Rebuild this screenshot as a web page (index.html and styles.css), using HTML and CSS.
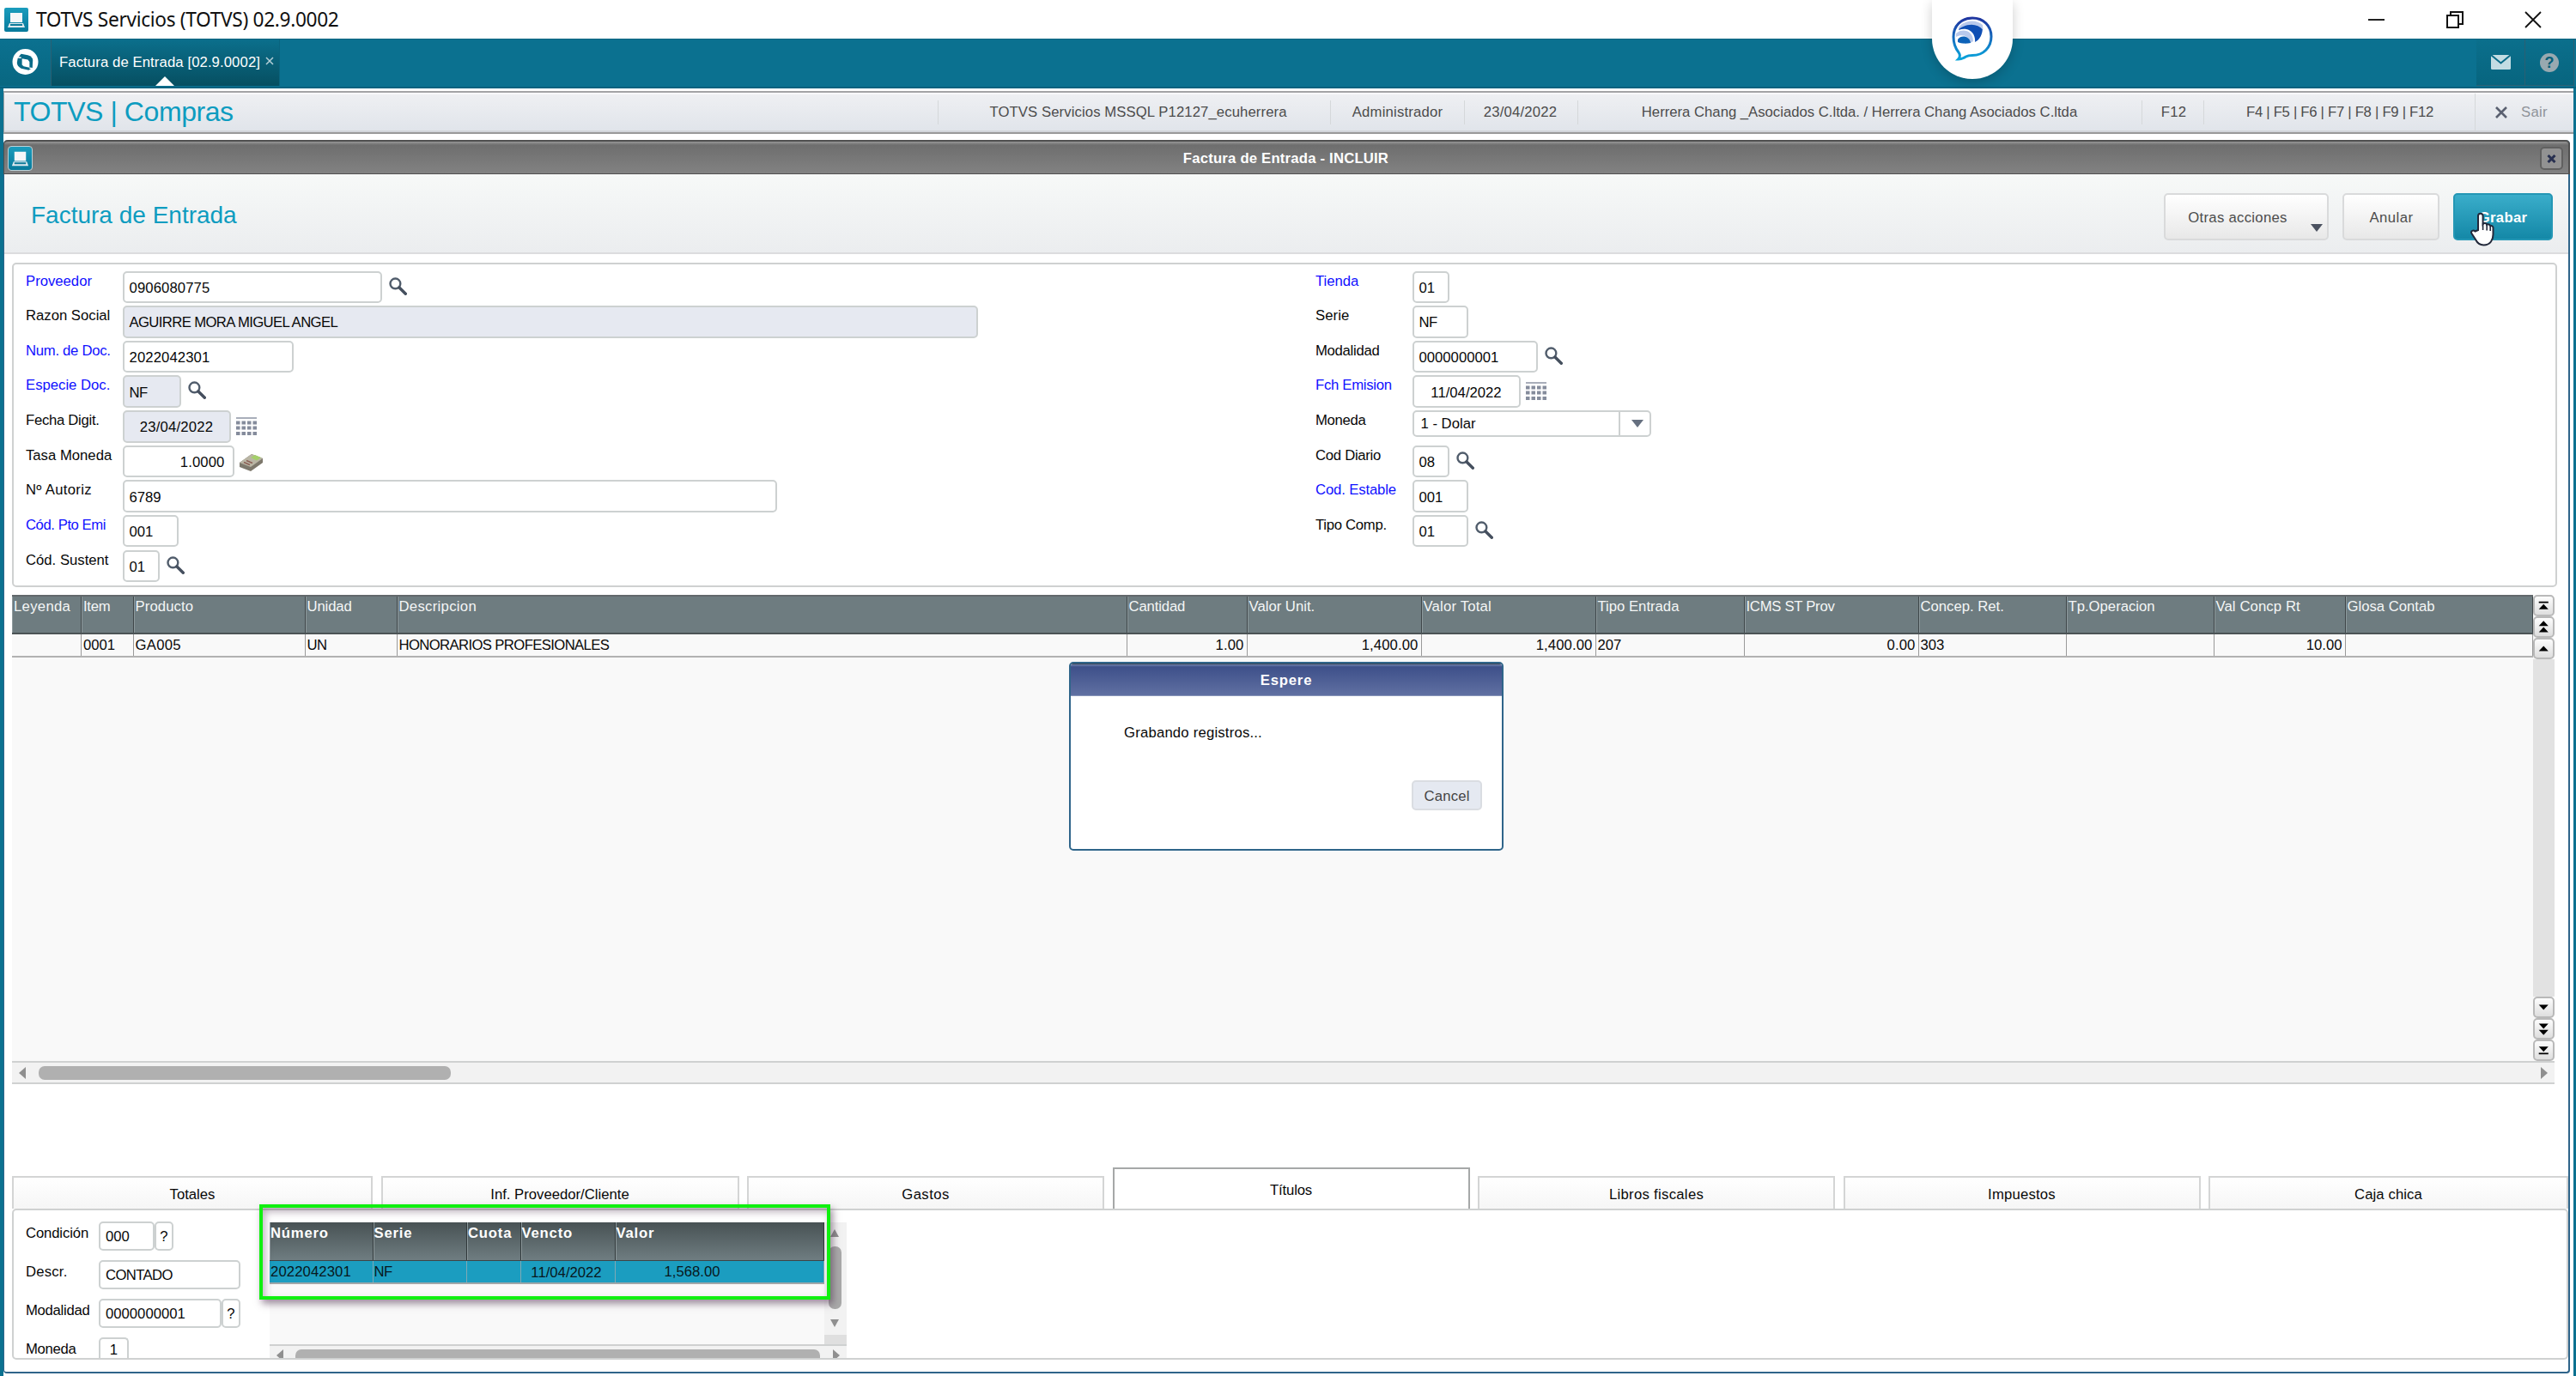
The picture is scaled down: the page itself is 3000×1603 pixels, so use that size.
FILE: index.html
```html
<!DOCTYPE html>
<html lang="es">
<head>
<meta charset="utf-8">
<title>TOTVS Servicios (TOTVS) 02.9.0002</title>
<link rel="stylesheet" href="styles.css">
</head>
<body>
<svg class="defs" width="0" height="0">
  <defs>
    <linearGradient id="tealGrad" x1="0" y1="0" x2="0" y2="1"><stop offset="0" stop-color="#1a9cbd"/><stop offset="1" stop-color="#087a9b"/></linearGradient>
    <linearGradient id="chatGrad" x1="0" y1="0" x2="0" y2="1"><stop offset="0" stop-color="#1f35a0"/><stop offset="1" stop-color="#0aa5dc"/></linearGradient>
    <symbol id="laptop" viewBox="0 0 28 28"><rect width="28" height="28" rx="2" fill="url(#tealGrad)"/><path d="M7 6h14v11H7z" fill="#f4f6f8"/><path d="M6 18h16l2 5H4z" fill="#dfe9ee"/><path d="M7 19h14v2H7z" fill="#0c7a99"/></symbol>
    <symbol id="lens" viewBox="0 0 21 21"><circle cx="7.4" cy="7.4" r="5.9" fill="none" stroke="#515d6c" stroke-width="2.4"/><path d="M12 12l7.3 7.3" stroke="#454f5e" stroke-width="3.4" stroke-linecap="round"/></symbol>
    <symbol id="calendar" viewBox="0 0 24 22"><path d="M0 1h24" stroke="#a9aeba" stroke-width="2"/><path d="M0 6.500h24M0 12.500h24M0 19h24" stroke="#858c9c" stroke-width="4.200" stroke-dasharray="4.500 2"/></symbol>
  </defs>
</svg>

<header class="os-bar">
  <svg class="os-icon" viewBox="0 0 28 28"><use href="#laptop"/></svg>
  <span class="os-title">TOTVS Servicios (TOTVS) 02.9.0002</span>
  <div class="os-controls">
    <svg viewBox="0 0 20 20"><path d="M0 10h19" stroke="#222" stroke-width="2"/></svg>
    <svg viewBox="0 0 20 20"><path d="M1 5h13v14H1zM5 5V1h14v14h-5" fill="none" stroke="#111" stroke-width="2"/></svg>
    <svg viewBox="0 0 20 20"><path d="M1 1l18 18M19 1L1 19" stroke="#111" stroke-width="1.800"/></svg>
  </div>
</header>

<nav class="tab-bar">
  <div class="home">
    <svg viewBox="0 0 32 32"><circle cx="16" cy="16" r="15.500" fill="#fff"/><path d="M11 6.500l8 1.500q6 2 6 6l-.5 9.500L20 26l-9-2q-5-3-5-7l1-6z" fill="#0a6b88"/><path d="M12 12l7 1.500 2 2.500v7l-7-1.500-2-2z" fill="#fff"/><path d="M6 10.500l5 .5M21 23.500l3.500.5" stroke="#fff" stroke-width="1.500"/></svg>
  </div>
  <div class="app-tab"><span class="ls1">Factura de Entrada [02.9.0002]</span><svg class="tab-x" viewBox="0 0 10 10"><path d="M1 1l8 8M9 1L1 9" stroke="#b6d0d8" stroke-width="1.500"/></svg><i class="pointer"></i></div>
  <div class="tab-tools">
    <div class="tool"><svg width="23" height="17" viewBox="0 0 23 17"><rect width="23" height="17" rx="1.500" fill="#c3dce3"/><path d="M0 0l11.500 9.500L23 0" fill="none" stroke="#0a6b88" stroke-width="2"/></svg></div>
    <div class="tool"><div class="help">?</div></div>
  </div>
  <div class="assistant">
    <svg width="48" height="54" viewBox="0 0 48 54"><path d="M24 2C37 2 46 11 46 23.500S37 45.500 24 45.500c-3 0-5 0-7.500 1.500-3 2-6 3-9 3 2-2 2.500-5 .5-8C4 37 2 31 2 24 2 11 11 2 24 2z" fill="#fff" stroke="url(#chatGrad)" stroke-width="3"/><path d="M9 13C18 6 29 5 36 12c0 9-3 15-9 18 1-8-4-14-10-15-3-.5-6 0-9 1z" fill="#0f4fb4"/><path d="M8 13C15 4 28 3 36 10l.5 6C30 8 18 8 8 15z" fill="#b8c9ec"/><path d="M5 20c8-7 20-3 20 9l-3 2C20 23 12 20 5 24z" fill="#b8c9ec"/><path d="M7 27c4-6 14-4 15 4-5 1-11 1-15-1z" fill="#0c62b8"/></svg>
  </div>
</nav>

<main class="workspace">
  <section class="status">
    <h1 class="module">TOTVS | Compras</h1>
    <span class="cell c-env ls1">TOTVS Servicios MSSQL P12127_ecuherrera</span>
    <span class="cell c-user ls2">Administrador</span>
    <span class="cell c-date ls2">23/04/2022</span>
    <span class="cell c-firm">Herrera Chang _Asociados C.ltda. / Herrera Chang Asociados C.ltda</span>
    <span class="cell c-f12 ls2">F12</span>
    <span class="cell c-keys tight">F4 | F5 | F6 | F7 | F8 | F9 | F12</span>
    <span class="cell c-exit"><svg width="14" height="14" viewBox="0 0 14 14"><path d="M1 1l12 12M13 1L1 13" stroke="#5a6070" stroke-width="2.600"/></svg><span class="ls3">Sair</span></span>
  </section>

  <section class="window">
    <div class="win-title">
      <svg class="win-icon" viewBox="0 0 28 28"><use href="#laptop"/></svg>
      <span class="win-name ls2">Factura de Entrada - INCLUIR</span>
      <div class="win-close"><svg width="11" height="10" viewBox="0 0 11 10"><path d="M1.500 1l8 8M9.500 1l-8 8" stroke="#283050" stroke-width="3"/></svg></div>
    </div>

    <div class="win-head">
      <h2>Factura de Entrada</h2>
      <div class="actions">
        <div class="btn btn-more"><span class="ls3">Otras acciones</span><i class="caret"></i></div>
        <div class="btn btn-cancel"><span class="ls4">Anular</span></div>
        <div class="btn btn-save"><span class="ls3">Grabar</span>
          <svg class="hand" width="30" height="40" viewBox="0 0 30 40"><path d="M11 21V4.500a2.800 2.800 0 0 1 5.600 0V14a2.700 2.700 0 0 1 4.600.8 2.700 2.700 0 0 1 4 1.400 2.300 2.300 0 0 1 3.300 2V26c0 6-3 12.500-11 12.500-5 0-7.500-2.500-9.500-6.500L3.500 25c-1.500-3 2-4.500 4-2.500z" fill="#fff" stroke="#22283a" stroke-width="2"/><path d="M16.600 13v8M21.200 15v6.500M25.200 17v5" stroke="#22283a" stroke-width="1.600"/></svg>
        </div>
      </div>
    </div>

    <div class="form">
      <div class="col col-left">
        <div class="row"><label class="req">Proveedor</label><div class="in w302"><span class="ls1">0906080775</span></div><svg class="ic"><use href="#lens"/></svg></div>
        <div class="row"><label>Razon Social</label><div class="in off w996"><span class="caps">AGUIRRE MORA MIGUEL ANGEL</span></div></div>
        <div class="row"><label class="req tight">Num. de Doc.</label><div class="in w199"><span class="ls1">2022042301</span></div></div>
        <div class="row"><label class="req">Especie Doc.</label><div class="in off w68"><span class="caps">NF</span></div><svg class="ic"><use href="#lens"/></svg></div>
        <div class="row"><label class="tight">Fecha Digit.</label><div class="in off w126 mid"><span class="ls2">23/04/2022</span></div><svg class="ic cal"><use href="#calendar"/></svg></div>
        <div class="row"><label>Tasa Moneda</label><div class="in w130 end"><span class="ls1">1.0000</span></div>
          <svg class="ic calc" viewBox="0 0 30 22"><path d="M1 11L15 1l13 5v5L14 21 1 16z" fill="#7d786c"/><path d="M1 11L15 1l13 5-14 10z" fill="#b9b5a4"/><path d="M14 5l5-3 7 3-5 3.500z" fill="#a5cf6a"/><path d="M6 10.500l7 3M9 8.500l7 3" stroke="#8b5f55" stroke-width="1.500"/></svg></div>
        <div class="row"><label class="ls3">Nº Autoriz</label><div class="in w762"><span>6789</span></div></div>
        <div class="row"><label class="req tighter">Cód. Pto Emi</label><div class="in w65"><span>001</span></div></div>
        <div class="row"><label>Cód. Sustent</label><div class="in w43"><span>01</span></div><svg class="ic"><use href="#lens"/></svg></div>
      </div>
      <div class="col col-right">
        <div class="row"><label class="req">Tienda</label><div class="in w43"><span>01</span></div></div>
        <div class="row"><label class="ls1">Serie</label><div class="in w65"><span class="caps">NF</span></div></div>
        <div class="row"><label class="tight">Modalidad</label><div class="in w146"><span>0000000001</span></div><svg class="ic"><use href="#lens"/></svg></div>
        <div class="row"><label class="req tight">Fch Emision</label><div class="in w126 mid"><span>11/04/2022</span></div><svg class="ic cal"><use href="#calendar"/></svg></div>
        <div class="row"><label class="tight">Moneda</label><div class="in combo"><span>1 - Dolar</span><b class="drop"><i class="caret"></i></b></div></div>
        <div class="row"><label class="tight">Cod Diario</label><div class="in w43"><span>08</span></div><svg class="ic"><use href="#lens"/></svg></div>
        <div class="row"><label class="req tight1">Cod. Estable</label><div class="in w65"><span>001</span></div></div>
        <div class="row"><label class="tight">Tipo Comp.</label><div class="in w65"><span>01</span></div><svg class="ic"><use href="#lens"/></svg></div>
      </div>
    </div>

    <div class="grid">
      <div class="grid-main">
        <div class="g-row g-head">
          <span class="ls3">Leyenda</span><span class="tight">Item</span><span class="ls1">Producto</span><span class="tight1">Unidad</span><span class="ls3">Descripcion</span><span class="tight1">Cantidad</span><span>Valor Unit.</span><span class="ls2">Valor Total</span><span>Tipo Entrada</span><span class="tight">ICMS ST Prov</span><span>Concep. Ret.</span><span>Tp.Operacion</span><span class="ls1">Val Concp Rt</span><span>Glosa Contab</span>
        </div>
        <div class="g-row g-body">
          <span></span><span>0001</span><span class="ls3">GA005</span><span class="caps">UN</span><span class="caps">HONORARIOS PROFESIONALES</span><span class="r ls1">1.00</span><span class="r ls1">1,400.00</span><span class="r ls1">1,400.00</span><span>207</span><span class="r ls1">0.00</span><span>303</span><span></span><span class="r">10.00</span><span></span>
        </div>
      </div>
      <div class="v-nav">
        <svg class="nb" viewBox="0 0 24 24"><path d="M5.500 6.500h13v2h-13zM12 10l6.500 7h-13z"/></svg>
        <svg class="nb" viewBox="0 0 24 24"><path d="M12 3.500l6.500 7h-13zM12 12l6.500 7h-13z"/></svg>
        <svg class="nb" viewBox="0 0 24 24"><path d="M12 8.500l6.500 7h-13z"/></svg>
        <div class="track"></div>
        <svg class="nb" viewBox="0 0 24 24"><path d="M12 15.500l6.500-7h-13z"/></svg>
        <svg class="nb" viewBox="0 0 24 24"><path d="M12 12l6.500-7h-13zM12 20.500l6.500-7h-13z"/></svg>
        <svg class="nb" viewBox="0 0 24 24"><path d="M12 14l6.500-7h-13zM5.500 15.500h13v2h-13z"/></svg>
      </div>
    </div>
    <div class="h-scroll"><i class="arr left"></i><i class="thumb"></i><i class="arr right"></i></div>

    <div class="tabs">
      <div class="tab">Totales</div><div class="tab">Inf. Proveedor/Cliente</div><div class="tab ls4">Gastos</div><div class="tab active tight1">Títulos</div><div class="tab ls3">Libros fiscales</div><div class="tab ls2">Impuestos</div><div class="tab ls1">Caja chica</div>
    </div>

    <div class="panel">
      <div class="pay">
        <div class="prow"><label class="tight1">Condición</label><div class="in w65"><span>000</span></div><div class="q">?</div></div>
        <div class="prow"><label class="ls2">Descr.</label><div class="in w165"><span class="caps">CONTADO</span></div></div>
        <div class="prow"><label class="tight">Modalidad</label><div class="in w143"><span>0000000001</span></div><div class="q">?</div></div>
        <div class="prow"><label class="tight">Moneda</label><div class="in w35 mid cut"><span>1</span></div></div>
      </div>
      <div class="dues">
        <div class="dues-top">
          <div class="dues-table">
            <div class="d-row d-head"><span>Número</span><span>Serie</span><span>Cuota</span><span>Vencto</span><span>Valor</span></div>
            <div class="d-row d-body"><span class="ls1">2022042301</span><span class="caps">NF</span><span></span><span class="venc">11/04/2022</span><span class="val">1,568.00</span></div>
          </div>
          <div class="d-scroll"><i class="arr up"></i><i class="d-thumb"></i><i class="arr down"></i></div>
        </div>
        <div class="d-hscroll"><i class="arr left"></i><i class="d-hthumb"></i><i class="arr right"></i></div>
        <div class="highlight"></div>
      </div>
    </div>

    <div class="dialog">
      <div class="dlg-title">Espere</div>
      <div class="dlg-body"><p class="ls2">Grabando registros...</p><div class="dlg-btn"><span class="ls2">Cancel</span></div></div>
    </div>
  </section>
</main>
</body>
</html>
```
FILE: styles.css
```css
* { box-sizing: border-box; }
html, body { margin: 0; padding: 0; }
body {
  width: 3000px; height: 1603px; overflow: hidden;
  display: flex; flex-direction: column;
  background: #fff; color: #080808;
  font-family: "Liberation Sans", Arial, sans-serif; font-size: 16.7px; line-height: 20px;
  white-space: nowrap;
}
.defs { position: absolute; }
h1, h2, p { margin: 0; font-weight: normal; }
svg { display: block; flex: none; }

/* tracking steps */
.ls1 { letter-spacing: .1px; }
.ls2 { letter-spacing: .2px; }
.ls3 { letter-spacing: .3px; }
.ls4 { letter-spacing: .45px; }
.tight1 { letter-spacing: -.13px; }
.tight { letter-spacing: -.28px; }
.tighter { letter-spacing: -.44px; }
.caps { letter-spacing: -.62px; }

/* operating system title bar */
.os-bar { height: 45px; flex: none; display: flex; align-items: center; padding: 0 40px 0 5px; background: #fff; }
.os-icon { width: 28px; height: 28px; }
.os-title { margin-left: 9px; font: 22.7px/30px "Noto Sans", sans-serif; letter-spacing: -.33px; color: #111; }
.os-controls { margin-left: auto; display: flex; gap: 71px; align-items: center; }
.os-controls svg { width: 20px; height: 20px; }

/* application tab strip */
.tab-bar { position: relative; height: 58px; flex: none; display: flex; background: #0b7190; border-top: 1px solid #04627f; border-bottom: 2px solid #04627f; }
.home { width: 60px; height: 54px; padding: 10px 0 0 14px; border-right: 1px solid #2b5f72; background: linear-gradient(#0b7190, #086781); }
.home svg { width: 31px; height: 32px; }
.app-tab { position: relative; width: 266px; height: 54px; padding-left: 9px; display: flex; align-items: center; gap: 6px; color: #fff; background: linear-gradient(#0b6f8c, #064f61); border-right: 1px solid #0a647e; }
.tab-x { width: 10px; height: 10px; margin-bottom: 4px; }
.pointer { position: absolute; left: 121px; bottom: 0; border: 11px solid transparent; border-top: 0; border-bottom-color: #fff; }
.tab-tools { margin-left: auto; display: flex; margin-right: 2px; }
.tool { width: 57px; height: 54px; display: flex; align-items: center; justify-content: center; border-right: 1px solid #2b5f72; border-bottom: 1px solid #2b5f72; background: linear-gradient(#0b6f8c, #07657f); }
.help { width: 22px; height: 22px; border-radius: 50%; background: #98a9b0; color: #075f78; font-weight: bold; font-size: 18px; line-height: 22px; text-align: center; }
.assistant { position: absolute; left: 2250px; top: -46px; width: 94px; height: 92px; border-radius: 0 0 47px 47px; background: #fff; box-shadow: 0 4px 14px rgba(0,0,0,.2); clip-path: inset(0 -20px -20px -20px); padding: 19px 0 0 23px; }

/* workspace */
.workspace { flex: 1; display: flex; flex-direction: column; padding: 3px 0; background: #fff; border: solid #0b7190; border-width: 0 3px 0 4px; }
.status { height: 50px; flex: none; display: flex; align-items: center; border: 1px solid #a3a3a5; border-top-width: 2px; border-bottom: 2px solid #999; border-right: 0; background: linear-gradient(#eff0f3, #e0e4ea); color: #4c4c4c; box-shadow: inset 0 2px 0 #f8f8fa, inset 0 -2px 0 #d2d5da; }
.module { width: 1087px; padding-left: 11px; margin-top: -2px; font-size: 32px; line-height: 44px; letter-spacing: -.42px; color: #0d9cc0; }
.cell { height: 28px; flex: none; display: flex; align-items: center; justify-content: center; border-left: 1px solid #d5d8da; }
.c-env { width: 457px; padding-left: 9px; }
.c-user { width: 156px; }
.c-date { width: 132px; padding-right: 2px; }
.c-firm { width: 657px; padding-right: 1px; }
.c-f12 { width: 72px; padding-left: 2px; }
.c-keys { width: 316px; padding-left: 1px; }
.cell.c-exit { flex: 1; height: 44px; gap: 16px; padding-right: 7px; color: #8f9399; }

.window { position: relative; margin: 7px 4px 0 0; flex: 1; display: flex; flex-direction: column; border: 2px solid #2f658a; border-top: 0; border-left-width: 1px; border-radius: 5px 5px 4px 4px; background: #fff; }
.win-title { height: 40px; margin: 0 -2px 0 -1px; flex: none; display: flex; align-items: center; justify-content: space-between; padding: 2px 6px 0 5px; border: solid #4f4f4f; border-width: 2px 2px 1px 1px; border-radius: 5px 5px 0 0; background: linear-gradient(#979797, #6e6e6e 4px, #828282); color: #fff; }
.win-icon { width: 27px; height: 27px; outline: 1px solid #bcd2d8; border-radius: 3px; }
.win-name { font-weight: bold; }
.win-close { width: 27px; height: 27px; display: flex; align-items: center; justify-content: center; border: 2px solid #606060; border-radius: 5px; background: #929292; }

.win-head { height: 93px; flex: none; display: flex; justify-content: space-between; align-items: flex-start; padding: 22px 18px 0 31px; background: linear-gradient(#f7f9f8, #ebedef); border-bottom: 2px solid #dcdcde; }
.win-head h2 { font-size: 28px; line-height: 32px; margin-top: 10px; color: #0d9cc0; }
.actions { display: flex; gap: 16px; }
.btn { position: relative; height: 55px; padding-top: 3px; display: flex; align-items: center; justify-content: center; border: 2px solid #d9dadb; border-radius: 5px; background: linear-gradient(#fff, #e8e8e8); color: #4c4c4c; }
.btn-more { width: 192px; padding-right: 20px; }
.btn-more .caret { position: absolute; right: 5px; bottom: 8px; }
.btn-cancel { width: 113px; padding-left: 1px; }
.btn-save { width: 116px; border-color: #2497b5; background: linear-gradient(#3aadca, #1488a7); color: #fff; font-weight: bold; }
.hand { position: absolute; left: 16px; top: 20px; }
.caret { display: block; border: 7px solid transparent; border-bottom: 0; border-top: 9px solid #4b5260; }

/* invoice header form */
.form { height: 378px; margin: 10px 13px 0 9px; flex: none; display: flex; border: 2px solid #cfd1d1; border-radius: 5px; padding-top: 7.500px; }
.col { flex: none; }
.col-left { width: 1516px; padding-left: 14px; }
.row { height: 40.650px; display: flex; align-items: flex-start; }
.row label { width: 112.500px; flex: none; padding-top: 2px; }
.req { color: #1010ff; }
.in { height: 37.500px; flex: none; display: flex; align-items: center; padding: 3px 0 0 6px; border: 2px solid #cdd1d1; border-radius: 5px; background: #fff; }
.off { background: #e6e9f1; }
.mid { justify-content: center; padding-left: 0; }
.end { justify-content: flex-end; padding-right: 9px; }
.w302 { width: 302px; } .w996 { width: 996px; } .w199 { width: 199px; } .w68 { width: 68px; }
.w126 { width: 126px; } .w130 { width: 130px; } .w762 { width: 762px; } .w65 { width: 65px; }
.w43 { width: 43px; } .w146 { width: 146px; } .w165 { width: 165px; } .w143 { width: 143px; } .w35 { width: 35px; }
.ic { width: 21px; height: 21px; margin: 7px 0 0 8px; }
.cal { width: 24px; height: 22px; margin: 8px 0 0 6px; }
.calc { width: 30px; height: 22px; margin: 9px 0 0 5px; }
.combo { width: 278px; height: 31px; padding: 0 0 0 8px; justify-content: space-between; }
.drop { width: 36px; height: 27px; padding-left: 6px; border-left: 2px solid #cdd1d1; display: flex; align-items: center; justify-content: center; }
.drop .caret { border-top-color: #667080; }

/* items grid */
.grid { height: 543px; margin: 9px 18px 0 9px; flex: none; display: flex; background: #f9f9f9; }
.grid-main { width: 2936px; flex: none; }
.g-row { display: grid; grid-template-columns: 81px 60.500px 200px 107px 850px 140px 203px 203px 173px 203px 172px 172px 153px 218.500px; }
.g-head { height: 46px; background: #6e7c80; border-top: 2px solid #62686b; border-bottom: 2px solid #4c5456; color: #f4f6f6; }
.g-head span { padding: 2px 0 0 2px; border-right: 1px solid #3f474a; box-shadow: inset 1px 0 0 #8d999c; }
.g-body { height: 27px; border-bottom: 2px solid #b2b2b2; }
.g-body span { padding: 3px 0 0 2px; border-right: 1px solid #9a9a9a; }
.g-body .r { text-align: right; padding-right: 3px; }
.v-nav { width: 25px; display: flex; flex-direction: column; }
.nb { width: 24.500px; height: 25px; border: 2px solid #b9b9b9; border-radius: 5px; background: linear-gradient(#fdfdfd, #dedede); }
.track { flex: 1; background: #e2e2e2; }
.h-scroll { height: 27px; margin: 0 16px 0 9px; flex: none; display: flex; align-items: center; padding: 0 8px; background: #f2f2f2; border: solid #cfd1d1; border-width: 2px 0; }
.arr { border: 7px solid transparent; flex: none; }
.arr.left { border-left: 0; border-right: 8px solid #8f8f8f; }
.arr.right { margin-left: auto; border-right: 0; border-left: 8px solid #8f8f8f; }
.arr.up { border-top: 0; border-width: 0 5.500px 9px; border-bottom-color: #8f8f8f; }
.arr.down { border-width: 9px 5.500px 0; border-top-color: #8f8f8f; }
.thumb { width: 480px; height: 16px; margin-left: 15px; border-radius: 7px; background: #b0b0b0; }

/* bottom tabs */
.tabs { height: 48px; margin: 97px 0 0 9px; flex: none; display: grid; grid-template-columns: 420px 417px 416px 416px 416px 416px 419px; gap: 9.500px; align-items: end; }
.tab { height: 38px; padding: 3px 0 0 0; display: flex; align-items: center; justify-content: center; border: 2px solid #d4d5d5; border-bottom: 0; background: linear-gradient(#fff, #f6f6f6); }
.tab.active { height: 48px; border-color: #a6a8a8; background: #fff; }
.panel { height: 176px; margin-left: 9px; flex: none; display: flex; border: 2px solid #cfd1d1; border-radius: 5px; clip-path: inset(-20px 0 0 0); }
.pay { width: 298px; height: 172px; flex: none; padding: 13px 0 0 14px; }
.prow { height: 45px; display: flex; align-items: flex-start; }
.prow label { width: 85px; flex: none; padding-top: 4px; }
.prow .in { height: 34px; padding-top: 1px; }
.prow .cut { height: 24px; border-bottom: 0; border-radius: 5px 5px 0 0; padding-top: 4px; }
.q { width: 22px; height: 34px; border: 2px solid #cdd1d1; border-radius: 5px; text-align: center; line-height: 32px; }
.dues { position: relative; width: 672px; height: 158px; flex: none; margin-top: 14px; }
.dues-top { height: 142px; display: flex; background: #f9f9f9; }
.dues-table { width: 646px; flex: none; }
.d-row { display: grid; grid-template-columns: 120.500px 109.500px 62.500px 110px 243px; }
.d-head { height: 45px; background: linear-gradient(#485254, #6f7d81); border-bottom: 1px solid #3c4548; color: #fff; font-weight: bold; letter-spacing: .8px; }
.d-head span { padding: 3px 0 0 1px; border-right: 1px solid #30383a; box-shadow: inset 1px 0 0 #8d999c; }
.d-body { height: 27px; width: 645.500px; background: #1b9dc0; border-bottom: 2px solid #a0a6a8; color: #081820; }
.d-body span { padding: 3px 0 0 1px; border-right: 1px solid #7fa9b5; }
.d-body .venc { text-align: center; padding: 4px 3px 0 0; }
.d-body .val { padding-left: 57px; }
.d-scroll { width: 26px; height: 131px; display: flex; flex-direction: column; align-items: center; padding: 8px 2px 9px 0; background: #f2f2f2; box-shadow: 0 11px 0 #dfdfdf; }
.d-thumb { width: 15px; height: 73px; margin: 11px 0 auto; border-radius: 7px; background: #a9a9a9; }
.d-hscroll { height: 16px; overflow: hidden; display: flex; align-items: flex-start; padding: 4px 8px 0; background: #f2f2f2; border-top: 2px solid #cfd1d1; }
.d-hthumb { width: 611px; height: 16px; flex: none; margin-left: 14px; border-radius: 7px; background: #b0b0b0; }
.highlight { position: absolute; left: -12px; top: -21px; width: 665px; height: 111px; border: 4px solid #10f010; box-shadow: 3px 5px 8px rgba(70,40,70,.5), inset 3px 5px 8px rgba(70,40,70,.35); }

/* wait dialog */
.dialog { position: absolute; left: 1240px; top: 608px; width: 506px; height: 220px; display: flex; flex-direction: column; border: 2px solid #2f658a; border-radius: 5px; background: #fff; overflow: hidden; }
.dlg-title { height: 38px; padding-top: 1px; flex: none; text-align: center; line-height: 38px; font-weight: bold; letter-spacing: .8px; color: #fff; background: linear-gradient(#8292b8, #3e508a 4px, #6070a2); border-bottom: 1px solid #8794b8; box-shadow: inset 0 1px 0 #3a4252; }
.dlg-body { flex: 1; display: flex; flex-direction: column; padding: 33px 23px 0 62px; }
.dlg-btn { margin: 45px 0 0 auto; width: 82px; height: 35px; padding-top: 2px; display: flex; align-items: center; justify-content: center; border: 2px solid #dadde2; border-radius: 5px; background: #e5e9f1; color: #444; }
```
